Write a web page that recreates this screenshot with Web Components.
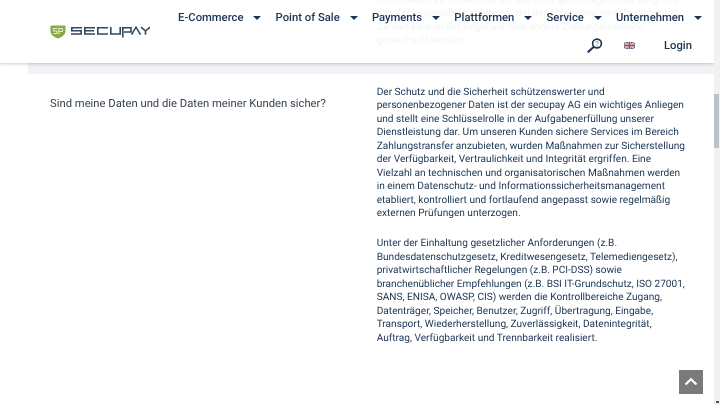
<!DOCTYPE html>
<html lang="de"><head><meta charset="utf-8"><title>secupay</title>
<style>
html,body{margin:0;padding:0;height:405px;overflow:hidden;background:#fff}
body{font-family:Roboto,"Liberation Sans",sans-serif;color:#1f3a5a;text-rendering:geometricPrecision}
</style></head><body>
<sp-app></sp-app>
<script>
function def(name,html){customElements.define(name,class extends HTMLElement{constructor(){super();this.attachShadow({mode:'open'}).innerHTML=html;}});}
def('sp-logo',`<style>:host{display:block;width:100px;height:14px}svg{display:block}</style>
<svg width="100" height="14" viewBox="0 0 100 14" fill="none">
<path d="M0.5 1.5Q0.5 .5 1.5 .5H14.5Q15.5 .5 15.5 1.5V6C15.5 10 11 12.6 8 13.5C5 12.6 .5 10 .5 6Z" fill="#8aab3c"/>
<path d="M7.3 3.5H3.5V6H7V8.5H3.5M8.8 9.5V3.5H12.5V6.5H9" stroke="#e6eed6" stroke-width="1"/>
<g stroke="#2f4a5f" stroke-width="1.6">
<path d="M32 2.7H21.8V5.8H31.2V9H21"/>
<path d="M45 2.7H34.8V9H45M35.5 5.8H44"/>
<path d="M58 2.7H47.8V9H58"/>
<path d="M60.8 2V9H70.2V2"/>
<path d="M72.8 12.5V2.7H81V7H74"/>
<path d="M81.5 9.7L86 2.2L90.5 9.7"/>
<path d="M91 2.2L95.5 6V9.7M100 2.2L95.5 6"/>
</g></svg>`);
def('sp-nav-item',`<style>:host{display:inline-flex;align-items:center;font:500 11.25px/16px Roboto,sans-serif;color:#1a3452;white-space:nowrap}
i{display:block;width:0;height:0;margin-left:10px;border:4px solid transparent;border-top:4.5px solid #1a3452;border-bottom:0}</style><slot></slot><i></i>`);
def('sp-header',`<style>:host{position:absolute;left:0;top:0;width:714px;height:63px;background:rgba(255,255,255,.94);box-shadow:0 1px 3px rgba(60,70,90,.28);display:flex;align-items:flex-start;box-sizing:border-box;padding:0 12px 0 50px}
.logo{margin-top:25px;flex:none}
.r{flex:1;display:flex;flex-direction:column;align-items:flex-end}
.top{display:flex;gap:14.2px;margin-top:9.5px;justify-content:flex-end}
.bot{display:flex;align-items:center;margin-top:12px;padding-right:10px}
.login{font:500 11.25px/16px Roboto,sans-serif;color:#1a3452;margin-left:29px}
.flag{margin-left:21px;display:block}
svg{display:block}</style>
<sp-logo class="logo"></sp-logo>
<div class="r"><div class="top">
<sp-nav-item>E-Commerce</sp-nav-item><sp-nav-item>Point of Sale</sp-nav-item><sp-nav-item>Payments</sp-nav-item><sp-nav-item>Plattformen</sp-nav-item><sp-nav-item>Service</sp-nav-item><sp-nav-item>Unternehmen</sp-nav-item></div>
<div class="bot">
<svg width="16" height="15" viewBox="0 0 16 15" fill="none"><circle cx="10" cy="5.5" r="4.4" stroke="#1a3452" stroke-width="1.6"/><path d="M6.6 9L1.4 13.8" stroke="#1a3452" stroke-width="2.1" stroke-linecap="round"/><path d="M8.7 4.5C8.9 3.2 11.3 3.2 11.3 4.6C11.3 5.5 10 5.4 10 6.5" stroke="#8aab3c" stroke-width="1"/><circle cx="10" cy="7.7" r=".6" fill="#8aab3c"/></svg>
<svg class="flag" width="11" height="7" viewBox="0 0 11 7"><rect width="11" height="7" fill="#4a5a80"/><path d="M0 0L11 7M11 0L0 7" stroke="#d9d9e2" stroke-width="1.3"/><path d="M5.5 0V7M0 3.5H11" stroke="#e5e5e5" stroke-width="2.4"/><path d="M5.5 0V7M0 3.5H11" stroke="#c8303c" stroke-width="1.3"/></svg>
<span class="login">Login</span></div></div>`);
def('sp-faq-row',`<style>:host{display:grid;grid-template-columns:326.7px 311px;padding:0 0 0 50px;font:400 10.125px/13.5px Roboto,sans-serif;color:#1a3452}
.q{font-size:11.25px;line-height:16px;padding-top:22px;color:#36434f}
.a{padding-top:12px}
::slotted(p){margin:0 0 16.5px;white-space:nowrap}</style>
<div class="q"><slot name="q"></slot></div><div class="a"><slot></slot></div>`);
def('sp-prev',`<style>:host{display:block;background:#f1f2f6;margin-left:28px;height:73.5px;box-sizing:border-box;position:relative;overflow:hidden}
div{padding:0 0 0 348.7px;margin-top:-6.5px;font:400 10.125px/13.5px Roboto,sans-serif;color:#1a3452;white-space:nowrap}</style><div><slot></slot></div>`);
def('sp-scrollbar',`<style>:host{display:block;position:absolute;left:714px;top:0;width:6px;height:405px;background:#f1f1f1}
div{position:absolute;left:0;right:.7px;top:94px;height:54px;background:#b9c2c8}
i{position:absolute;left:1.5px;bottom:2px;width:3px;height:2px;background:#555}</style><div></div><i></i>`);
def('sp-top',`<style>:host{position:absolute;left:679px;top:370px;width:24px;height:23.5px;background:#7a7a7a;display:flex;align-items:center;justify-content:center}</style>
<svg width="14" height="9" viewBox="0 0 14 9" fill="none"><path d="M1.5 7.5L7 2.2L12.5 7.5" stroke="#fff" stroke-width="2.2"/></svg>`);
def('sp-app',`<style>:host{display:block;position:relative;width:720px;height:405px;overflow:hidden;background:#fff;filter:blur(.25px)}
main{width:714px}</style>
<main>
<sp-prev>entscheiden zu können, ob wir den Kauf genehmigen oder aufgrund<br>des Zahlungsrisikos ablehnen. Bei der Ablehnung einer bestimmten<br>Zahlart kann in der Regel auf eine andere Zahlungsmethode<br>gewechselt werden.</sp-prev>
<sp-faq-row><span slot="q">Sind meine Daten und die Daten meiner Kunden sicher?</span>
<p>Der Schutz und die Sicherheit schützenswerter und<br>personenbezogener Daten ist der secupay AG ein wichtiges Anliegen<br>und stellt eine Schlüsselrolle in der Aufgabenerfüllung unserer<br>Dienstleistung dar. Um unseren Kunden sichere Services im Bereich<br>Zahlungstransfer anzubieten, wurden Maßnahmen zur Sicherstellung<br>der Verfügbarkeit, Vertraulichkeit und Integrität ergriffen. Eine<br>Vielzahl an technischen und organisatorischen Maßnahmen werden<br>in einem Datenschutz- und Informationssicherheitsmanagement<br>etabliert, kontrolliert und fortlaufend angepasst sowie regelmäßig<br>externen Prüfungen unterzogen.</p>
<p>Unter der Einhaltung gesetzlicher Anforderungen (z.B.<br>Bundesdatenschutzgesetz, Kreditwesengesetz, Telemediengesetz),<br>privatwirtschaftlicher Regelungen (z.B. PCI-DSS) sowie<br>branchenüblicher Empfehlungen (z.B. BSI IT-Grundschutz, ISO 27001,<br>SANS, ENISA, OWASP, CIS) werden die Kontrollbereiche Zugang,<br>Datenträger, Speicher, Benutzer, Zugriff, Übertragung, Eingabe,<br>Transport, Wiederherstellung, Zuverlässigkeit, Datenintegrität,<br>Auftrag, Verfügbarkeit und Trennbarkeit realisiert.</p>
</sp-faq-row></main>
<sp-header></sp-header><sp-top></sp-top><sp-scrollbar></sp-scrollbar>`);
</script></body></html>
